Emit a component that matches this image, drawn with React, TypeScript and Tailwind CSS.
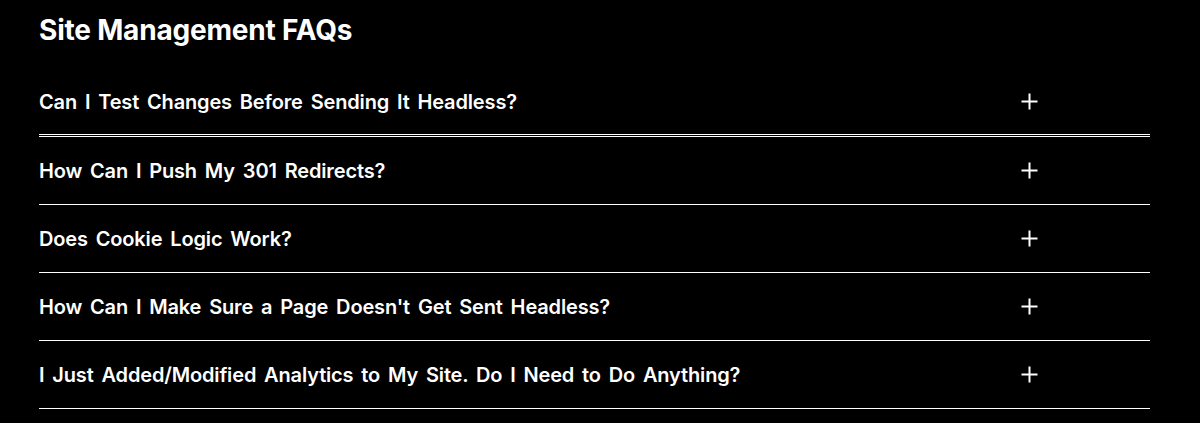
import React from "react";

const questions = [
  "Can I Test Changes Before Sending It Headless?",
  "How Can I Push My 301 Redirects?",
  "Does Cookie Logic Work?",
  "How Can I Make Sure a Page Doesn't Get Sent Headless?",
  "I Just Added/Modified Analytics to My Site. Do I Need to Do Anything?",
];

function PlusIcon() {
  return (
    <svg width="17" height="17" viewBox="0 0 17 17" fill="none">
      <line x1="8.5" y1="0.5" x2="8.5" y2="16.5" stroke="white" strokeWidth="2" />
      <line x1="0.5" y1="8.5" x2="16.5" y2="8.5" stroke="white" strokeWidth="2" />
    </svg>
  );
}

export default function App() {
  return (
    <div
      className="w-[1200px] h-[423px] bg-black text-white overflow-hidden"
      style={{ fontFamily: "Inter, 'Noto Sans', sans-serif" }}
    >
      <div className="pl-[39px] w-[1150px]">
        <div className="h-[68px] pt-[13px]">
          <h2 className="text-[28px] leading-[34px] font-bold tracking-[-0.2px]">
            Site Management FAQs
          </h2>
        </div>
        {questions.map((q, i) => (
          <div
            key={q}
            className={
              i === 0
                ? "h-[69px] pt-[1px] flex items-center justify-between pr-[112px] border-b-[3px] border-double border-white"
                : "h-[68px] flex items-center justify-between pr-[112px] border-b border-white"
            }
          >
            <span className="text-[20px] leading-[28px] font-semibold tracking-[-0.15px] [word-spacing:3px]">
              {q}
            </span>
            <PlusIcon />
          </div>
        ))}
      </div>
    </div>
  );
}
